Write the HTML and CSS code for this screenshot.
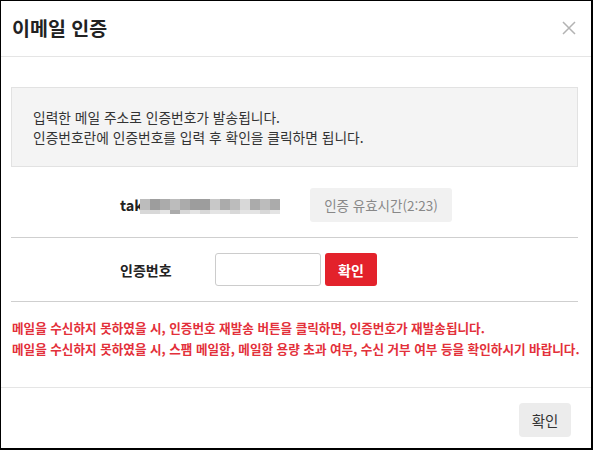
FILE: index.html
```html
<!DOCTYPE html>
<html lang="ko">
<head>
<meta charset="utf-8">
<title>이메일 인증</title>
<link rel="stylesheet" href="styles.css">
</head>
<body>
<div class="modal">
  <header class="modal-header">
    <h1 class="modal-title">이메일 인증</h1>
    <button class="close-btn" aria-label="닫기">
      <svg width="14" height="14" viewBox="0 0 14 14"><path d="M1 1L13 13M13 1L1 13" stroke="#b3b3b3" stroke-width="1.5" fill="none"/></svg>
    </button>
  </header>
  <main class="modal-body">
    <div class="info-box">
      <p>입력한 메일 주소로 인증번호가 발송됩니다.</p>
      <p>인증번호란에 인증번호를 입력 후 확인을 클릭하면 됩니다.</p>
    </div>
    <div class="row email-row">
      <div class="email">
        <span class="email-text">tak</span>
        <span class="blur">
          <span class="blur-top">
            <i class="s3"></i><i class="s1"></i><i class="s2"></i><i class="s3"></i><i class="s2"></i><i class="s1"></i><i class="s1"></i><i class="s4"></i><i class="s2"></i><i class="s3"></i><i class="s5"></i><i class="s2"></i><i class="s3"></i><i class="s2"></i>
          </span>
          <span class="blur-bottom">
            <i class="s5"></i><i class="s5"></i><i class="s6"></i><i class="s2"></i><i class="s5"></i><i class="s6"></i><i class="s5"></i><i class="s6"></i><i class="s6"></i><i class="s5"></i><i class="s6"></i><i class="s6"></i><i class="s5"></i><i class="s6"></i>
          </span>
        </span>
      </div>
      <button class="timer-btn">인증 유효시간(2:23)</button>
    </div>
    <div class="row code-row">
      <label class="code-label" for="code">인증번호</label>
      <input id="code" class="code-input" type="text">
      <button class="confirm-red">확인</button>
    </div>
    <div class="notice">
      <p>메일을 수신하지 못하였을 시, 인증번호 재발송 버튼을 클릭하면, 인증번호가 재발송됩니다.</p>
      <p>메일을 수신하지 못하였을 시, 스팸 메일함, 메일함 용량 초과 여부, 수신 거부 여부 등을 확인하시기 바랍니다.</p>
    </div>
  </main>
  <footer class="modal-footer">
    <button class="footer-btn">확인</button>
  </footer>
</div>
</body>
</html>
```

FILE: styles.css
```css
* { box-sizing: border-box; }
html, body { margin: 0; padding: 0; }
body {
  width: 593px;
  height: 450px;
  font-family: "Noto Sans CJK KR", "Noto Sans", sans-serif;
  color: #333;
  background: #fff;
  overflow: hidden;
}
.modal {
  width: 593px;
  height: 450px;
  border-top: 1px solid #000;
  border-left: 1px solid #000;
  border-right: 2px solid #000;
  border-bottom: 2px solid #000;
  display: flex;
  flex-direction: column;
}
.modal-header {
  height: 56px;
  border-bottom: 1px solid #e5e5e5;
  display: flex;
  align-items: center;
  justify-content: space-between;
  padding: 0 15px 2px 11px;
  flex-shrink: 0;
}
.modal-title {
  margin: 0;
  font-size: 19.5px;
  font-weight: 700;
  color: #222;
  line-height: 24px;
}
.close-btn {
  border: 0;
  background: none;
  padding: 0;
  width: 14px;
  height: 14px;
  display: flex;
}
.modal-body {
  flex: 1;
  padding: 30px 13px 0 10px;
}
.info-box {
  background: #f4f4f4;
  border: 1px solid #e2e2e2;
  height: 80px;
  padding: 19px 20px 0 21px;
}
.info-box p {
  margin: 0;
  font-size: 13.75px;
  line-height: 20px;
  color: #333;
}
.row {
  display: flex;
  align-items: center;
  padding-left: 109px;
}
.email-row {
  padding-top: 21px;
  padding-bottom: 15px;
  border-bottom: 1px solid #cfcfcf;
}
.email {
  display: flex;
  align-items: center;
  width: 190px;
}
.email-text {
  font-size: 14.5px;
  font-weight: 700;
  color: #222;
  line-height: 20px;
}
.blur {
  display: flex;
  flex-direction: column;
  margin-left: -3px;
  margin-top: 2px;
}
.blur-top, .blur-bottom { display: flex; }
.blur i { display: block; width: 10px; }
.blur-top i { height: 11px; }
.blur-bottom i { height: 4px; }
.s1 { background: #9d9d9d; }
.s2 { background: #ababab; }
.s3 { background: #bcbcbc; }
.s4 { background: #c8c8c8; }
.s5 { background: #d8d8d8; }
.s6 { background: #e4e4e4; }
.timer-btn {
  width: 142px;
  height: 34px;
  border: 0;
  border-radius: 3px;
  background: #f1f1f1;
  color: #888;
  font-family: inherit;
  font-size: 13.5px;
  padding: 0;
}
.code-row {
  padding-top: 15px;
  padding-bottom: 15px;
  border-bottom: 1px solid #cfcfcf;
}
.code-label {
  width: 95px;
  font-size: 14px;
  font-weight: 700;
  color: #222;
}
.code-input {
  width: 106px;
  height: 33px;
  border: 1px solid #cccccc;
  border-radius: 3px;
  margin: 0;
  padding: 0 6px;
  font-family: inherit;
}
.confirm-red {
  margin-left: 4px;
  width: 52px;
  height: 33px;
  border: 0;
  border-radius: 3px;
  background: #e3222b;
  color: #fff;
  font-family: inherit;
  font-size: 14px;
  font-weight: 700;
  padding: 0;
}
.notice {
  padding-top: 15px;
  padding-left: 1px;
}
.notice p {
  margin: 0;
  font-size: 12.6px;
  font-weight: 700;
  line-height: 21px;
  color: #e3303a;
  white-space: nowrap;
}
.modal-footer {
  height: 61px;
  border-top: 1px solid #e5e5e5;
  display: flex;
  justify-content: flex-end;
  align-items: flex-start;
  padding: 15px 20px 0 0;
  flex-shrink: 0;
}
.footer-btn {
  width: 52px;
  height: 34px;
  border: 0;
  border-radius: 4px;
  background: #ececec;
  color: #333;
  font-family: inherit;
  font-size: 14.5px;
  padding: 0;
}
```
